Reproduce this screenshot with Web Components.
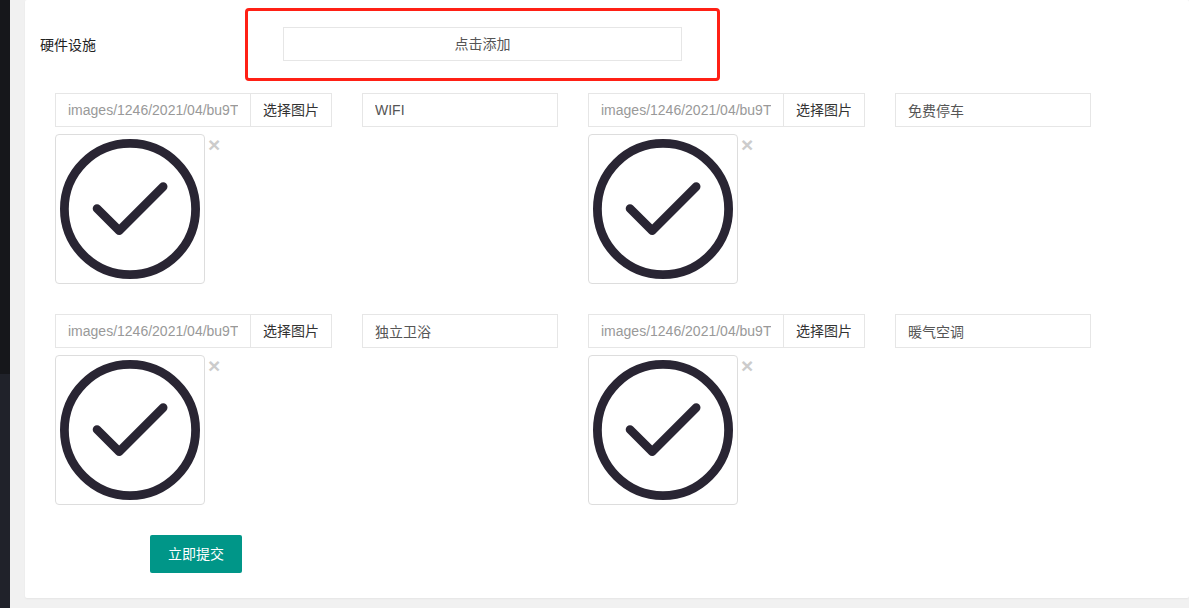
<!DOCTYPE html>
<html lang="zh-CN">
<head>
<meta charset="utf-8">
<meta name="viewport" content="width=device-width, initial-scale=1">
<title>硬件设施</title>
<style>
  body {
    margin: 0;
    background: #f1f1f1;
    color: #333;
    font: 14px/20px "Liberation Sans", "Noto Sans CJK SC", sans-serif;
  }
</style>
</head>
<body>
<admin-shell>
  <side-rail slot="side"></side-rail>
  <form-card>
    <form-row slot="head" label="硬件设施">
      <add-button>点击添加</add-button>
    </form-row>
    <facility-item path="images/1246/2021/04/bu9T" name="WIFI"></facility-item>
    <facility-item path="images/1246/2021/04/bu9T" name="免费停车"></facility-item>
    <facility-item path="images/1246/2021/04/bu9T" name="独立卫浴"></facility-item>
    <facility-item path="images/1246/2021/04/bu9T" name="暖气空调"></facility-item>
    <submit-button slot="foot">立即提交</submit-button>
  </form-card>
</admin-shell>

<script>
class AdminShell extends HTMLElement {
  constructor() {
    super();
    this.attachShadow({ mode: 'open' }).innerHTML = `
      <style>
        :host { display: flex; min-height: 100vh; }
        main {
          flex: 1;
          min-width: 0;
          box-sizing: border-box;
          padding: 0 0 10px 15px;
        }
      </style>
      <slot name="side"></slot>
      <main><slot></slot></main>
    `;
  }
}
customElements.define('admin-shell', AdminShell);

// Visible edge of the menu: open submenu on top, plain menu below
class SideRail extends HTMLElement {
  constructor() {
    super();
    this.attachShadow({ mode: 'open' }).innerHTML = `
      <style>
        :host {
          display: flex;
          flex: none;
          flex-direction: column;
          width: 10px;
          background: #20222a;
        }
        div { height: 374px; background: #16171b; }
      </style>
      <div></div>
    `;
  }
}
customElements.define('side-rail', SideRail);

class FormCard extends HTMLElement {
  constructor() {
    super();
    this.attachShadow({ mode: 'open' }).innerHTML = `
      <style>
        :host {
          display: block;
          padding: 8px 0 25px;
          border-radius: 2px;
          background: #fff;
          box-shadow: 0 1px 2px rgba(0, 0, 0, .05);
        }
        .list {
          display: grid;
          grid-template-columns: 1fr 1fr;
          gap: 30px;
          margin: 12px 98px 30px 30px;
        }
        .foot { padding-left: 125px; }
      </style>
      <slot name="head"></slot>
      <div class="list"><slot></slot></div>
      <div class="foot"><slot name="foot"></slot></div>
    `;
  }
}
customElements.define('form-card', FormCard);

class FormRow extends HTMLElement {
  connectedCallback() {
    if (this.shadowRoot) return;
    this.attachShadow({ mode: 'open' }).innerHTML = `
      <style>
        :host {
          display: grid;
          grid-template-columns: 205px 475fr 469fr;
          align-items: center;
          padding-left: 15px;
        }
        span { color: #222; }
      </style>
      <span>${this.getAttribute('label')}</span>
      <slot></slot>
    `;
  }
}
customElements.define('form-row', FormRow);

class AddButton extends HTMLElement {
  constructor() {
    super();
    this.attachShadow({ mode: 'open' }).innerHTML = `
      <style>
        :host {
          display: block;
          padding: 16px 35px 17px;
          border: 3px solid #ff2015;
          border-radius: 4px;
        }
        button {
          display: block;
          box-sizing: border-box;
          width: 100%;
          height: 34px;
          padding: 0;
          border: 1px solid #e6e6e6;
          background: #fff;
          color: #555;
          font: inherit;
          cursor: pointer;
        }
      </style>
      <button type="button"><slot></slot></button>
    `;
  }
}
customElements.define('add-button', AddButton);

class FacilityItem extends HTMLElement {
  connectedCallback() {
    if (this.shadowRoot) return;
    this.attachShadow({ mode: 'open' }).innerHTML = `
      <style>
        :host {
          display: grid;
          grid-template-columns: 277fr 196fr;
          gap: 30px;
          align-items: start;
        }
        .picker { display: flex; margin-bottom: 7px; }
        input, .pick {
          box-sizing: border-box;
          height: 34px;
          padding: 0 12px;
          border: 1px solid #e6e6e6;
          border-radius: 0;
          background: #fff;
          font: inherit;
        }
        input { width: 100%; min-width: 0; color: #555; }
        .path { flex: 1; border-right: 0; color: #999; }
        .pick { flex: none; color: #333; cursor: pointer; }
        .preview { display: flex; align-items: flex-start; gap: 3px; }
        svg {
          width: 140px;
          height: 140px;
          padding: 4px;
          border: 1px solid #ddd;
          border-radius: 4px;
        }
        .remove {
          padding: 0;
          border: 0;
          background: none;
          color: #ccc;
          font: bold 21px/21px "Liberation Sans", sans-serif;
          cursor: pointer;
        }
      </style>
      <div>
        <div class="picker">
          <input class="path" type="text" aria-label="图片地址">
          <button class="pick" type="button">选择图片</button>
        </div>
        <div class="preview">
          <svg viewBox="0 0 140 140" fill="none" stroke="#292533" role="img">
            <circle cx="70" cy="70" r="65.6" stroke-width="8.8"/>
            <path d="M37 69.5 59.2 91.6 103.2 47.6" stroke-width="8.6" stroke-linecap="round" stroke-linejoin="round"/>
          </svg>
          <button class="remove" type="button" title="删除">×</button>
        </div>
      </div>
      <input class="name" type="text" aria-label="名称">
    `;
    this.shadowRoot.querySelector('.path').value = this.getAttribute('path');
    this.shadowRoot.querySelector('.name').value = this.getAttribute('name');
  }
}
customElements.define('facility-item', FacilityItem);

class SubmitButton extends HTMLElement {
  constructor() {
    super();
    this.attachShadow({ mode: 'open' }).innerHTML = `
      <style>
        :host { display: block; }
        button {
          display: block;
          height: 38px;
          padding: 0 18px;
          border: 0;
          border-radius: 2px;
          background: #009688;
          color: #fff;
          font: inherit;
          cursor: pointer;
        }
      </style>
      <button type="submit"><slot></slot></button>
    `;
  }
}
customElements.define('submit-button', SubmitButton);
</script>
</body>
</html>
